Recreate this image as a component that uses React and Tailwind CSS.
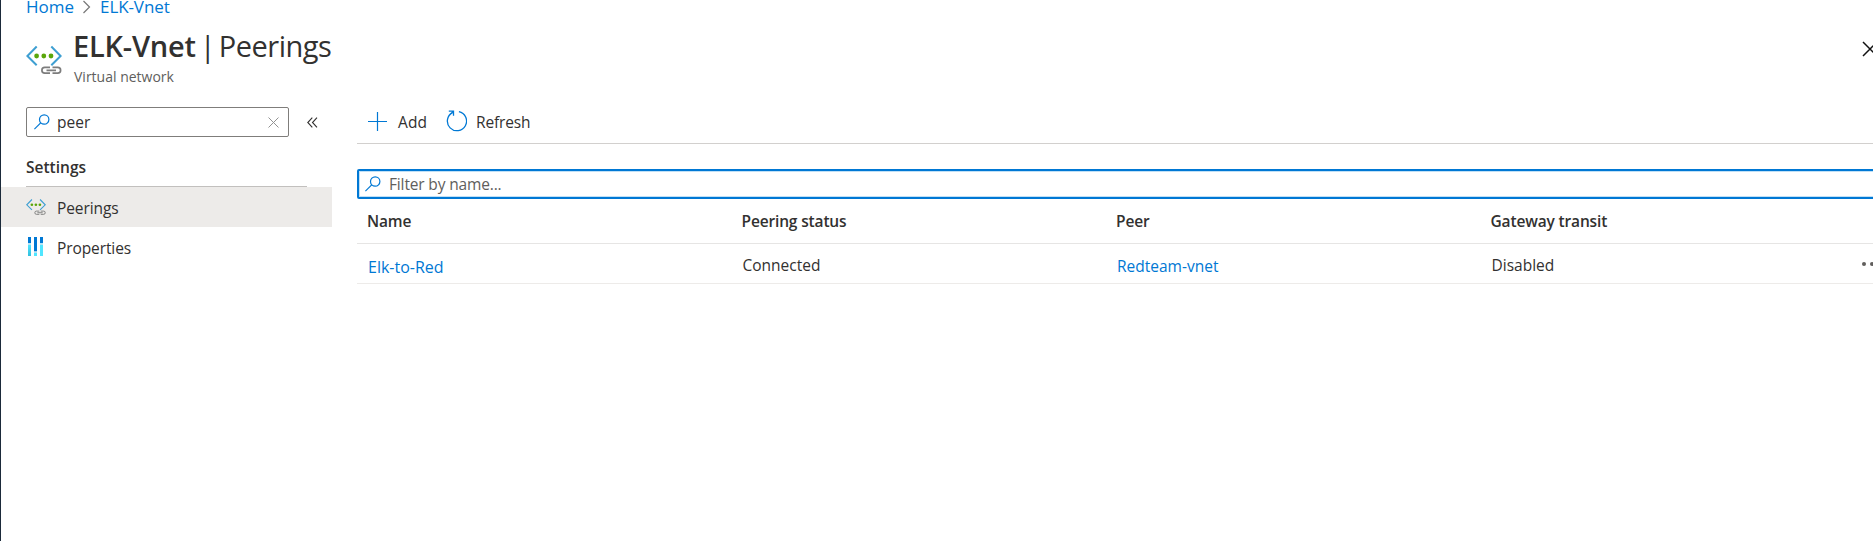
function PeeringIcon({ className = '' }) {
  return (
    <svg viewBox="0 0 36 36" fill="none" className={`shrink-0 ${className}`}>
      <path d="M10.700 4.500 1.400 14 10.700 23.300M25.300 4.500 34.600 14 25.300 23.300" stroke="#3e9fd2" strokeWidth="2" />
      <g fill="#5aa60a">
        <circle cx="10.600" cy="14" r="2.400" />
        <circle cx="17.800" cy="14" r="2.400" />
        <circle cx="25" cy="14" r="2.400" />
      </g>
      <path d="M24 25.400h-5.200a2.900 2.900 0 0 0 0 5.800H24M26.500 25.400h5.200a2.900 2.900 0 0 1 0 5.800h-5.200M20.500 28.300h9.500" stroke="#7d7d7d" strokeWidth="1.700" />
    </svg>
  );
}

function PropertiesIcon() {
  return (
    <svg width="16" height="19" viewBox="0 0 16 19" className="-mt-px">
      <defs>
        <linearGradient id="bar" x1="0" y1="1" x2="0" y2="0">
          <stop offset="0" stopColor="#32bedd" />
          <stop offset="1" stopColor="#50e6ff" />
        </linearGradient>
      </defs>
      <path fill="#0078d4" d="M0 0h3v6H0zM6 0h3v14.500H6zM12 0h3v6h-3z" />
      <path fill="#b5e4f5" d="M0 6h3v2H0zM6 14.500h3V16H6zM12 6h3v2h-3z" />
      <path fill="url(#bar)" d="M0 8h3v11H0z" />
      <path fill="#50e6ff" d="M6 16h3v3H6zM12 8h3v11h-3z" />
    </svg>
  );
}

function SearchIcon() {
  return (
    <svg width="16" height="16" viewBox="0 0 16 16" fill="none" stroke="#0078d4" strokeWidth="1.200" className="shrink-0">
      <circle cx="10.200" cy="5.500" r="4.700" />
      <path d="M6.700 8.800.4 15.100" />
    </svg>
  );
}

const columns = ['Name', 'Peering status', 'Peer', 'Gateway transit'];

export default function App() {
  return (
    <div className="flex h-[541px] w-full flex-col overflow-hidden border-l border-[#1b2a3a] bg-white font-['Open_Sans',sans-serif] text-[15.5px] text-[#323130]">
      <nav className="flex h-[13px] shrink-0 items-center pl-[25px] text-[17px] leading-[13px] text-[#0078d4]">
        <span>Home</span>
        <svg width="9" height="14" viewBox="0 0 9 14" fill="none" stroke="#777" strokeWidth="1.200" className="mr-[9px] ml-[8px]">
          <path d="M1.500 1 7.500 7l-6 6" />
        </svg>
        <span className="tracking-[-0.1px]">ELK-Vnet</span>
      </nav>

      <header className="flex h-[74px] shrink-0 pt-[13px] pl-[25px]">
        <PeeringIcon className="mt-4 size-9" />
        <div className="ml-[11px] flex-1">
          <h1 className="flex h-10 text-[29px] leading-10">
            <span className="tracking-[-0.2px] font-semibold">ELK-Vnet</span>
            <span className="ml-[4px]">|</span>
            <span className="ml-[3px] tracking-[-0.5px]">Peerings</span>
          </h1>
          <p className="pl-px text-[14px] leading-[21px] text-[#605e5c]">Virtual network</p>
        </div>
        <svg width="16" height="16" viewBox="0 0 16 16" fill="none" stroke="#111" strokeWidth="1.500" className="mt-[15px] -mr-[5px]">
          <path d="m1 1 14 14M15 1 1 15" />
        </svg>
      </header>

      <div className="flex flex-1">
        <aside className="w-[331px] shrink-0 pt-5">
          <div className="flex items-center pl-[25px]">
            <div className="flex h-[30px] w-[263px] items-center rounded-[2px] border border-[#7f7d7b] pr-[9px] pl-[7px]">
              <SearchIcon />
              <span className="mt-[2px] ml-[7px] flex-1">peer</span>
              <svg width="11" height="11" viewBox="0 0 11 11" fill="none" stroke="#929292" strokeWidth="1">
                <path d="m.5.5 10 10M10.500.5l-10 10" />
              </svg>
            </div>
            <svg width="11" height="11" viewBox="0 0 11 11" fill="none" stroke="#323130" strokeWidth="1.100" className="mt-px ml-[18px]">
              <path d="M5.300.7.800 5.500l4.500 4.800M10 .7 5.500 5.500l4.500 4.800" />
            </svg>
          </div>
          <h2 className="mt-[20px] ml-[25px] h-[30px] w-[281px] border-b border-[#c2c0be] leading-[21px] font-semibold">Settings</h2>
          <div className="flex h-10 items-center bg-[#edebe9] pl-[25px]">
            <PeeringIcon className="size-5" />
            <span className="mt-[4px] ml-[11px] tracking-[-0.1px]">Peerings</span>
          </div>
          <div className="flex h-10 items-center pl-[27px]">
            <PropertiesIcon />
            <span className="mt-[4px] ml-[13px] tracking-[-0.1px]">Properties</span>
          </div>
        </aside>

        <main className="ml-[25px] min-w-0 flex-1">
          <div className="flex h-[57px] items-center border-b border-[#d2d0ce] pt-[14px] pl-[11px]">
            <svg width="19" height="19" viewBox="0 0 19 19" stroke="#0078d4" strokeWidth="1.200" className="-mt-[2px]">
              <path d="M9.500 0v19M0 9.500h19" />
            </svg>
            <span className="mt-[2px] ml-[11px] tracking-[0.1px]">Add</span>
            <svg width="21" height="22" viewBox="0 0 21 22" fill="none" stroke="#0078d4" strokeWidth="1.300" className="-mt-[2px] ml-[19px]">
              <path d="M12.900 1.700A9.600 9.600 0 1 1 6.500 2.600M2.800 1.200H7.500V5.800M7.200 1.500 4.500 4" />
            </svg>
            <span className="mt-[2px] ml-[9px] tracking-[-0.15px]">Refresh</span>
          </div>

          <div className="mt-[25px] -mr-2 flex h-[30px] items-center rounded-[2px] border-2 border-[#0078d4] pl-[6px] text-[#605e5c] ring-1 ring-[#c0e0f6] ring-inset">
            <SearchIcon />
            <span className="mt-[2px] ml-[8px] tracking-[-0.15px]">Filter by name...</span>
          </div>

          <div className="-mr-2 grid h-[45px] grid-cols-[374.5px_374.5px_374.5px_1fr] items-center border-b border-[#e6e5e4] pt-[2px] pl-[10px] font-semibold">
            {columns.map((c) => (
              <span key={c} className="tracking-[-0.15px]">{c}</span>
            ))}
          </div>
          <div className="-mr-2 grid h-10 grid-cols-[374.5px_374.5px_374.5px_371px_1fr] items-center border-b border-[#edebe9] pl-[10px]">
            <a className="pt-[6px] pl-px text-[16px] text-[#0078d4]">Elk-to-Red</a>
            <span className="pt-[5px] pl-px">Connected</span>
            <a className="pt-[6px] pl-px text-[#0078d4]">Redteam-vnet</a>
            <span className="pt-[5px] pl-px">Disabled</span>
            <svg width="20" height="4" viewBox="0 0 20 4" fill="#605e5c">
              <circle cx="2" cy="2" r="2" />
              <circle cx="10" cy="2" r="2" />
              <circle cx="18" cy="2" r="2" />
            </svg>
          </div>
        </main>
      </div>
    </div>
  );
}
